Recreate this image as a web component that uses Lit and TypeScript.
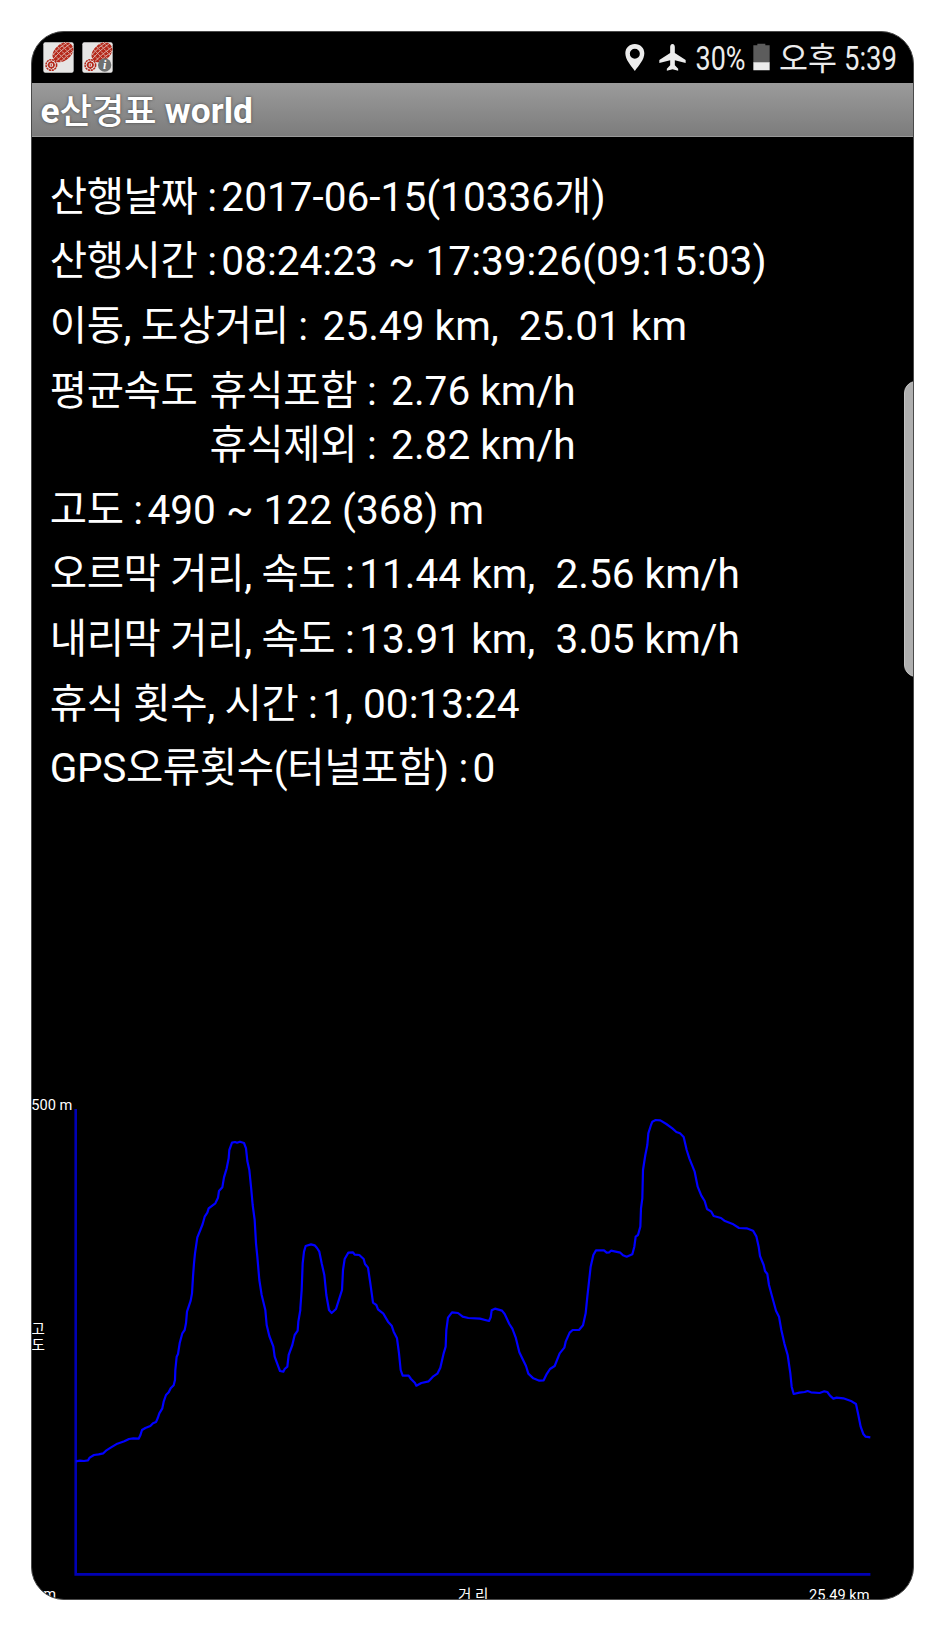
import { LitElement, html, svg, css } from "lit";
import { customElement, property } from "lit/decorators.js";

interface Leg {
  dx: number;
  dy: number;
  pts: number[];
}

// Elevation track, in thirds of a pixel, stored leg by leg.
const LEGS: Leg[] = [
  {
    dx: 60, dy: 0,
    pts: [
      167, 1114, 180, 1112, 192, 1113, 204, 1111, 209, 1103, 222, 1095, 236, 1093, 250, 1090, 258, 1082, 272, 1073,
      292, 1061, 313, 1054, 327, 1047, 340, 1045, 356, 1046, 361, 1036, 366, 1020, 376, 1014, 391, 1008, 399, 1000,
      408, 996, 413, 985, 418, 970, 427, 955, 431, 935, 438, 915, 446, 907, 452, 895, 461, 886, 465, 870, 466, 840,
      470, 800, 474, 792, 479, 760, 487, 730, 494, 720, 498, 700, 501, 665, 512, 632, 516, 610, 519, 560, 522, 520,
      525, 490, 532, 442, 541, 420, 548, 402, 554, 380, 562, 368, 566, 355, 586, 340, 594, 323, 597, 303, 607, 292,
      612, 262, 620, 235, 626, 205, 628, 180, 636, 158, 645, 156, 651, 158, 660, 155, 672, 159, 678, 175, 682, 213,
      688, 240, 694, 300, 698, 345, 704, 390, 708, 460, 712, 500, 718, 570, 725, 615, 736, 660, 740, 705, 748, 738,
      760, 770, 764, 800, 775, 830, 780, 843, 790, 845, 794, 837, 802, 830, 806, 795, 817, 765, 824, 735, 833, 722,
      835, 695, 841, 660,
    ],
  },
  {
    dx: 900, dy: 390,
    pts: [
      1, 265, 5, 210, 8, 130, 12, 95, 17, 78, 33, 73, 44, 76, 51, 84, 58, 95, 65, 130, 73, 165, 79, 225, 87, 270,
      95, 279, 108, 267, 115, 245, 126, 210, 129, 150, 134, 117, 145, 98, 159, 97, 164, 104, 178, 105, 191, 117,
      195, 132, 204, 143, 211, 190, 219, 248, 229, 255, 234, 268, 250, 281, 264, 305, 275, 317, 281, 335, 291, 355,
      297, 400, 302, 450, 308, 467, 326, 467, 333, 477, 345, 489, 349, 497, 364, 489, 386, 484, 400, 469, 412, 461,
      421, 443, 431, 400, 437, 380, 439, 330, 444, 293, 456, 277, 474, 279, 488, 290, 505, 294, 540, 296, 567, 303,
      572, 292, 575, 271, 585, 266, 606, 272, 614, 282, 628, 312, 637, 326, 647, 352, 658, 397, 678, 438, 685, 461,
      700, 475, 718, 482, 731, 481, 739, 464, 750, 447, 764, 438, 779, 400, 793, 383, 797, 365, 809, 338, 818, 330,
      837, 330, 849, 316, 857, 280,
    ],
  },
  {
    dx: 1710, dy: 30,
    pts: [
      47, 640, 52, 590, 57, 545, 62, 500, 70, 465, 78, 451, 102, 451, 110, 458, 118, 457, 123, 452, 151, 458, 159, 466,
      170, 470, 187, 463, 193, 440, 197, 410, 204, 405, 211, 380, 213, 325, 217, 295, 219, 210, 226, 165, 232, 135,
      235, 100, 243, 75, 247, 65, 257, 60, 271, 61, 289, 72, 307, 85, 319, 96, 330, 100, 341, 111, 350, 150, 358, 175,
      374, 215, 383, 260, 394, 287, 404, 303, 411, 327, 424, 335, 431, 348, 453, 354, 463, 362, 490, 373, 507, 384,
      530, 385, 549, 392, 559, 409, 566, 440, 570, 468, 581, 495, 585, 513, 592, 522, 597, 555, 605, 585, 618, 632,
      627, 650, 634, 690, 643, 730, 653, 765, 661, 820, 665, 860, 671, 882, 688, 878, 704, 876, 713, 873, 723, 877,
      749, 879, 763, 874, 772, 876, 780, 887, 790, 896, 800, 893, 820, 895, 845, 904, 858, 912, 865, 945, 872, 980,
      880, 1002, 887, 1010, 901, 1012,
    ],
  },
];

const TRACK = LEGS.map((leg) => {
  const out: string[] = [];
  for (let i = 0; i < leg.pts.length; i += 2) {
    out.push(`${((leg.pts[i] + leg.dx) / 3 - 32).toFixed(2)},${((leg.pts[i + 1] + leg.dy) / 3).toFixed(2)}`);
  }
  return out.join(" ");
}).join(" ");

@customElement("app-badge")
class AppBadge extends LitElement {
  @property({ type: Boolean }) info = false;

  static styles = css`
    :host { display: block; width: 31px; height: 31px; }
    svg { display: block; }
  `;

  render() {
    return html`<svg width="31" height="31" viewBox="0 0 93 93">
      <rect x="1" y="1" width="91" height="91" rx="6" fill="#e6e5e4" />
      <g transform="translate(59 31) rotate(-40)">
        <path d="M-34 2 C-35 -14 -20 -23 -2 -24 C18 -26 34 -18 35 -1 C35 16 20 25 2 25 C-18 25 -33 17 -34 2Z" fill="#b5281a" />
        <g stroke="#e9dcd8" stroke-width="2" fill="none">
          <path d="M-25 -20 L-21 20 M-13 -24 L-9 24 M-1 -25 L2 26 M11 -26 L14 26 M23 -22 L25 21" stroke-dasharray="8 3" />
          <path d="M-35 -3 Q0 -9 36 -5 M-33 8 Q0 4 35 8 M-26 18 Q2 15 27 18 M-29 -13 Q4 -19 32 -14" />
        </g>
      </g>
      <g transform="translate(25 69)" fill="none" stroke="#b5281a">
        <circle r="16" stroke-width="4.500" stroke-dasharray="6.6 1.800" />
        <circle r="8" stroke-width="4.500" />
        <path d="M0 -12V-5M0 12V5M-12 0H-5M12 0H5" stroke-width="3" />
        <circle r="2" fill="#b5281a" />
      </g>
      ${this.info
        ? svg`<circle cx="68" cy="69" r="20" fill="#6f7070" />
            <text x="68" y="81" text-anchor="middle" font-family="Liberation Serif, serif" font-style="italic" font-weight="700" font-size="36" fill="#fff">i</text>`
        : null}
    </svg>`;
  }
}

@customElement("status-bar")
class StatusBar extends LitElement {
  static styles = css`
    :host { display: flex; flex: none; justify-content: space-between; height: 50.5px; box-sizing: border-box; padding: 10px 14px 0 11px; }
    .apps, .system { display: flex; }
    .apps { gap: 8px; }
    svg { display: block; flex: none; overflow: visible; }
    text { font-family: Roboto, "Noto Sans CJK KR", sans-serif; fill: #ececec; }
    .plane { margin-left: 13.500px; }
    .level { margin-left: 10px; }
    .battery { margin-left: 7.500px; }
    .clock { margin-left: 10px; }
  `;

  render() {
    return html`
      <div class="apps"><app-badge></app-badge><app-badge info></app-badge></div>
      <div class="system">
        <svg width="20" height="38" viewBox="0 0 60 114">
          <path fill-rule="evenodd" fill="#ececec" d="M29.500 6C13 6 1 18 1 34c0 19 16 36 28.500 53C42 70 58 53 58 34 58 18 46 6 29.500 6Zm0 14a15 15 0 1 1 0 30a15 15 0 0 1 0-30Z" />
        </svg>
        <svg class="plane" width="27" height="38" viewBox="0 0 81 114">
          <path fill="#ececec" d="M40.500 6c5 0 7 5 7 10v17L80 54v9L47.500 55v15l10 10v6l-17-4-17 4v-6l10-10V55L1 63v-9L33.500 33V16c0-5 2-10 7-10Z" />
        </svg>
        <svg class="level" width="50" height="38">
          <text x="-0.500" y="27.500" font-size="32.500" textLength="50" lengthAdjust="spacingAndGlyphs">30%</text>
        </svg>
        <svg class="battery" width="17" height="38" viewBox="0 0 51 114">
          <path fill="#5c5c5c" d="M1 10h12V5h24v5h13v52H1Z" />
          <path fill="#ececec" d="M1 61h49v24H1Z" />
        </svg>
        <svg class="clock" width="119" height="38">
          <text x="-1" y="27.500" font-size="31.500">오후</text>
          <text x="64" y="27.500" font-size="32.500" textLength="53" lengthAdjust="spacingAndGlyphs">5:39</text>
        </svg>
      </div>
    `;
  }
}

@customElement("elevation-chart")
class ElevationChart extends LitElement {
  static styles = css`
    :host { display: block; flex: none; height: 509px; }
    svg { display: block; overflow: visible; }
    text { font-family: Roboto, "Noto Sans CJK KR", sans-serif; font-size: 14.6px; fill: #fff; }
    .axis { stroke: #0000b4; stroke-width: 2.6; fill: none; }
    .track { stroke: #0000ff; stroke-width: 2.2; fill: none; stroke-linejoin: round; }
  `;

  render() {
    return html`<svg width="881" height="509">
      <path class="axis" d="M43.700 19V484.400H838.400" />
      <polyline class="track" points=${TRACK}></polyline>
      <text x="-0.700" y="20">500 m</text>
      <text x="-0.500" y="243.500">고</text>
      <text x="-0.500" y="260">도</text>
      <text x="-0.500" y="509">0 m</text>
      <text x="426" y="509.500">거 리</text>
      <text x="777" y="509.500">25.49 km</text>
    </svg>`;
  }
}

@customElement("app-root")
class AppRoot extends LitElement {
  static styles = css`
    :host { display: block; box-sizing: border-box; width: 945px; height: 1631px; padding: 31px; background: #fff; font-family: Roboto, "Noto Sans CJK KR", sans-serif; }
    .phone { position: relative; display: flex; flex-direction: column; box-sizing: border-box; width: 883px; height: 1569px; border: 1px solid #4a4a4a; border-radius: 33px; overflow: hidden; background: #000; color: #fff; }
    .title { flex: none; box-sizing: border-box; height: 54.5px; padding-left: 8.5px; line-height: 57px; font-size: 35.3px; font-weight: 700; white-space: pre; background: linear-gradient(#9b9b9b, #7c7c7c); border-bottom: 1px solid #999; text-shadow: 0 0 3px #444; }
    .title .ko { font-weight: 500; line-height: 1; vertical-align: -1px; letter-spacing: -0.3px; }
    .stats { flex: 1; min-height: 0; padding: 27.800px 0 0 17.700px; font-size: 40.6px; line-height: 64.6px; }
    .row { display: flex; height: 64.6px; }
    .label, .value { white-space: pre; }
    .label { letter-spacing: -0.38px; }
    .value { margin-left: 4.700px; }
    .pair { display: flex; line-height: 54.7px; height: 109.4px; padding: 5px 0 4.900px; }
    .modes { margin-left: 11.900px; }
    .mode { display: flex; height: 54.7px; }
    .handle { position: absolute; top: 349px; right: -15px; width: 24px; height: 294px; border: 1px solid #c2c2c2; border-radius: 15px; background: #afafaf; box-sizing: border-box; height: 296px; }
  `;

  private line(kind: string, label: string, value: string) {
    return html`<div class=${kind}><span class="label">${label}</span><span class="value">${value}</span></div>`;
  }

  render() {
    return html`<div class="phone">
      <status-bar></status-bar>
      <div class="title">e<span class="ko">산경표</span> world</div>
      <div class="stats">
        ${this.line("row", "산행날짜 :", "2017-06-15(10336개)")}
        ${this.line("row", "산행시간 :", "08:24:23 ~ 17:39:26(09:15:03)")}
        ${this.line("row", "이동, 도상거리 :", " 25.49 km,  25.01 km")}
        <div class="pair">
          <span class="label">평균속도</span>
          <div class="modes">
            ${this.line("mode", "휴식포함 :", " 2.76 km/h")}
            ${this.line("mode", "휴식제외 :", " 2.82 km/h")}
          </div>
        </div>
        ${this.line("row", "고도 :", "490 ~ 122 (368) m")}
        ${this.line("row", "오르막 거리, 속도 :", "11.44 km,  2.56 km/h")}
        ${this.line("row", "내리막 거리, 속도 :", "13.91 km,  3.05 km/h")}
        ${this.line("row", "휴식 횟수, 시간 :", "1, 00:13:24")}
        ${this.line("row", "GPS오류횟수(터널포함) :", "0")}
      </div>
      <elevation-chart></elevation-chart>
      <div class="handle"></div>
    </div>`;
  }
}
